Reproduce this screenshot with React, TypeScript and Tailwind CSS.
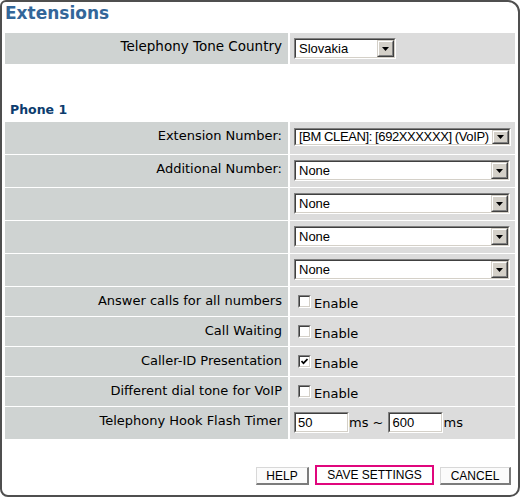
import React from "react";

const sans = "font-['DejaVu_Sans',Verdana,sans-serif]";
const arial = "font-['Liberation_Sans',Arial,sans-serif]";

function Arrow() {
  return (
    <div className="h-full w-[17px] border border-t-[#d4d0c8] border-l-[#d4d0c8] border-b-[#404040] border-r-[#404040]">
      <div className="h-full w-full border border-t-white border-l-white border-b-[#808080] border-r-[#808080] bg-[#d4d0c8] flex items-center justify-center">
        <svg width="7" height="4" viewBox="0 0 7 4">
          <polygon points="0,0 7,0 3.5,4" fill="#000" />
        </svg>
      </div>
    </div>
  );
}

function Select({ cls, text, textCls = "" }: { cls: string; text: string; textCls?: string }) {
  return (
    <div className={`flex border border-t-[#808080] border-l-[#808080] border-b-white border-r-white ${cls}`}>
      <div className="flex flex-1 min-w-0 border border-t-[#404040] border-l-[#404040] border-b-[#d4d0c8] border-r-[#d4d0c8] bg-white">
        <div className={`flex-1 min-w-0 overflow-hidden whitespace-nowrap flex items-center pl-[3px] text-[13px] text-black ${arial} ${textCls}`}>
          {text}
        </div>
        <Arrow />
      </div>
    </div>
  );
}

function Checkbox({ checked }: { checked?: boolean }) {
  return (
    <div className="w-[13px] h-[13px] border border-t-[#808080] border-l-[#808080] border-b-white border-r-white shrink-0">
      <div className="w-full h-full border border-t-[#404040] border-l-[#404040] border-b-[#d4d0c8] border-r-[#d4d0c8] bg-white flex items-center justify-center">
        {checked && (
          <svg width="7" height="7" viewBox="0 0 7 7">
            <polyline points="0.5,3 2.5,5.2 6.5,1" fill="none" stroke="#000" strokeWidth="1.7" />
          </svg>
        )}
      </div>
    </div>
  );
}

function TextInput({ value }: { value: string }) {
  return (
    <div className="w-[55px] h-[21px] border border-t-[#808080] border-l-[#808080] border-b-white border-r-white shrink-0">
      <div className={`w-full h-full border border-t-[#404040] border-l-[#404040] border-b-[#d4d0c8] border-r-[#d4d0c8] bg-white flex items-center pl-[2px] text-[13px] text-black ${arial}`}>
        {value}
      </div>
    </div>
  );
}

const labelBase = `bg-[#cfd3d2] text-right pr-[6px] leading-[16px] text-black ${sans}`;
const label = `${labelBase} pt-[6px] text-[13px]`;
const value = "bg-[#dcdcdc] pl-[4px]";

function CheckRow({ text, checked }: { text: string; checked?: boolean }) {
  return (
    <>
      <div className={`${label} h-[29px]`}>{text}</div>
      <div className="bg-[#dcdcdc] h-[29px] pl-[8px] pt-[8px] flex items-start">
        <Checkbox checked={checked} />
        <span className={`ml-[3px] mt-[1px] leading-[16px] text-[13px] text-black ${sans}`}>Enable</span>
      </div>
    </>
  );
}

export default function App() {
  return (
    <div className="w-[520px] h-[497px] bg-white border-2 border-[#4f4f4f] rounded-tl-[6px] rounded-tr-[12px] rounded-bl-[8px] rounded-br-[10px] px-[3px] overflow-hidden">
      <div className={`pt-[1px] text-[17px] font-bold leading-[20px] text-[#336699] ${sans}`}>Extensions</div>

      <div className="mt-[10px] grid grid-cols-[283px_225px] gap-x-[2px]">
        <div className={`${labelBase} h-[31px] pt-[5px] text-[13.5px]`}>Telephony Tone Country</div>
        <div className={`${value} h-[31px] pt-[5px]`}>
          <Select cls="w-[102px] h-[21px]" text="Slovakia" />
        </div>
      </div>

      <div className={`mt-[38px] pl-[5px] text-[12.5px] font-bold leading-[16px] text-[#0c3c6e] ${sans}`}>Phone 1</div>

      <div className="mt-[4px] grid grid-cols-[283px_225px] gap-x-[2px] gap-y-px">
        <div className={`${label} h-[32px]`}>Extension Number:</div>
        <div className={`${value} h-[32px] pt-[6px]`}>
          <Select cls="w-[217px] h-[18px]" text="[BM CLEAN]: [692XXXXXX] (VoIP)" textCls="tracking-[-0.4px]" />
        </div>

        <div className={`${label} h-[32px]`}>Additional Number:</div>
        <div className={`${value} h-[32px] pt-[5px]`}>
          <Select cls="w-[216px] h-[21px]" text="None" />
        </div>

        <div className={`${label} h-[32px]`}></div>
        <div className={`${value} h-[32px] pt-[5px]`}>
          <Select cls="w-[216px] h-[21px]" text="None" />
        </div>

        <div className={`${label} h-[32px]`}></div>
        <div className={`${value} h-[32px] pt-[5px]`}>
          <Select cls="w-[216px] h-[21px]" text="None" />
        </div>

        <div className={`${label} h-[32px]`}></div>
        <div className={`${value} h-[32px] pt-[5px]`}>
          <Select cls="w-[216px] h-[21px]" text="None" />
        </div>

        <CheckRow text="Answer calls for all numbers" />
        <CheckRow text="Call Waiting" />
        <CheckRow text="Caller-ID Presentation" checked />
        <CheckRow text="Different dial tone for VoIP" />

        <div className={`${label} h-[32px]`}>Telephony Hook Flash Timer</div>
        <div className={`${value} h-[32px] pt-[5px]`}>
          <div className={`flex items-center text-[13px] leading-[16px] text-black ${sans}`}>
            <TextInput value="50" />
            <span>ms ~</span>
            <div className="ml-[5px]">
              <TextInput value="600" />
            </div>
            <span>ms</span>
          </div>
        </div>
      </div>

      <div className={`mt-[26px] mr-[4px] flex justify-end items-end gap-[6px] text-[12px] text-black ${arial}`}>
        <button className="w-[53px] h-[18px] bg-[#fbfbfb] border-t border-l border-t-[#d8d8d8] border-l-[#d8d8d8] border-r-2 border-b-2 border-r-[#7c7c7c] border-b-[#7c7c7c] leading-none pt-[1px]">
          HELP
        </button>
        <button className="w-[119px] h-[20px] bg-white border-2 border-[#e0077d] leading-none">
          SAVE SETTINGS
        </button>
        <button className="w-[71px] h-[18px] bg-[#fbfbfb] border-t border-l border-t-[#d8d8d8] border-l-[#d8d8d8] border-r-2 border-b-2 border-r-[#7c7c7c] border-b-[#7c7c7c] leading-none pt-[1px]">
          CANCEL
        </button>
      </div>
    </div>
  );
}
